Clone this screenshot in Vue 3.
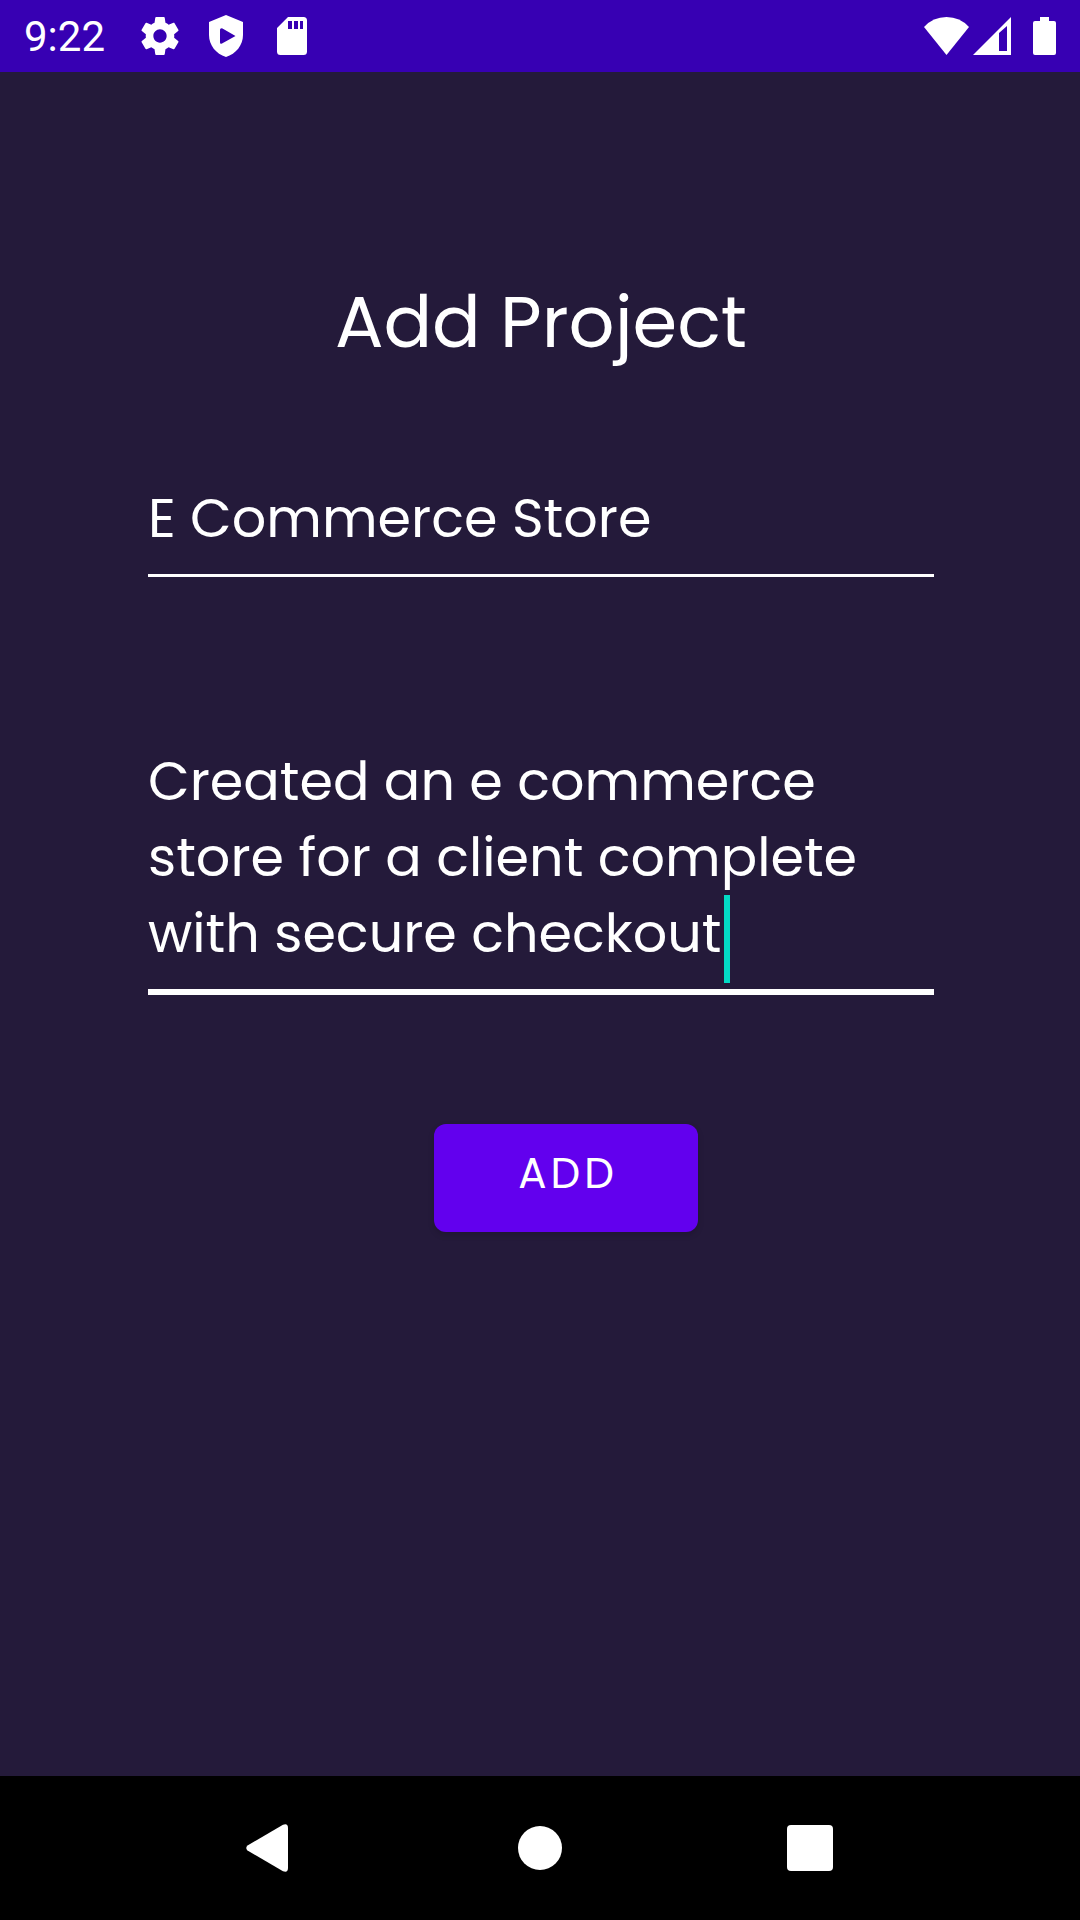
<script setup>
import { ref } from 'vue'

const title = ref('E Commerce Store')
const description = ref('Created an e commerce store for a client complete with secure checkout')
</script>

<template>
  <div class="screen">
    <header class="status">
      <div class="status-left">
        <span class="clock">9:22</span>
        <svg viewBox="2 2 20 20" width="38" height="38" aria-hidden="true">
          <path fill="currentColor" d="M19.43 12.98c.04-.32.07-.64.07-.98s-.03-.66-.07-.98l2.11-1.65c.19-.15.24-.42.12-.64l-2-3.46c-.12-.22-.39-.3-.61-.22l-2.49 1c-.52-.4-1.08-.73-1.69-.98l-.38-2.65A.49.49 0 0 0 14 2h-4c-.25 0-.46.18-.49.42l-.38 2.65c-.61.25-1.17.59-1.69.98l-2.49-1c-.23-.09-.49 0-.61.22l-2 3.46c-.13.22-.07.49.12.64l2.11 1.65c-.04.32-.07.65-.07.98s.03.66.07.98l-2.11 1.65c-.19.15-.24.42-.12.64l2 3.46c.12.22.39.3.61.22l2.49-1c.52.4 1.08.73 1.69.98l.38 2.65c.03.24.24.42.49.42h4c.25 0 .46-.18.49-.42l.38-2.65c.61-.25 1.17-.59 1.69-.98l2.49 1c.23.09.49 0 .61-.22l2-3.46c.12-.22.07-.49-.12-.64l-2.11-1.65zM12 15.5c-1.93 0-3.5-1.57-3.5-3.5s1.57-3.5 3.5-3.5 3.5 1.57 3.5 3.5-1.57 3.5-3.5 3.5z" />
        </svg>
        <svg viewBox="0 0 34 42" width="38" height="42" aria-hidden="true">
          <path fill="currentColor" fill-rule="evenodd" d="M17 0 34 7v13c0 10-7 19-17 22C7 39 0 30 0 20V7zM12.500 13.200Q11 13.200 11 14.700V27.300Q11 29.500 13 28.500L26.500 21 13.500 13.500z" />
        </svg>
        <svg viewBox="0 0 30 38" width="38" height="38" aria-hidden="true">
          <path fill="currentColor" fill-rule="evenodd" d="M11 0H26.500Q30 0 30 3.500V34.500Q30 38 26.500 38H3.500Q0 38 0 34.500V11zM11 4v8h4V4zm6 0v8h4V4zm6 0v8h3V4z" />
        </svg>
      </div>
      <div class="status-right">
        <svg viewBox="0 0 45 38" width="45" height="38" aria-hidden="true">
          <path fill="currentColor" d="M0 10Q9 0 22.500 0T45 10L22.500 38z" />
        </svg>
        <svg class="signal" viewBox="0 0 38 38" width="38" height="38" aria-hidden="true">
          <path fill="currentColor" fill-rule="evenodd" d="M0 38 38 0V38zM26 16V34H34V9z" />
        </svg>
        <svg viewBox="0 0 23 38" width="23" height="38" aria-hidden="true">
          <path fill="currentColor" d="M7 0h9v4h5q2 0 2 2v30q0 2-2 2H2q-2 0-2-2V6q0-2 2-2h5z" />
        </svg>
      </div>
    </header>

    <main class="content">
      <h1>Add Project</h1>
      <form @submit.prevent>
        <input v-model="title" class="field" type="text" aria-label="Project title" />
        <div class="description">
          <textarea v-model="description" class="field active" rows="3" spellcheck="false" aria-label="Project description"></textarea>
          <span class="caret" aria-hidden="true"></span>
        </div>
        <button class="add" type="submit">ADD</button>
      </form>
    </main>

    <nav class="navbar" aria-label="System navigation">
      <button type="button" aria-label="Back">
        <svg class="back" viewBox="0 0 42 48" width="42" height="48">
          <path fill="currentColor" d="M1.500 21.500 37 .800Q42-1 42 4V44Q42 49 37 47.200L1.500 26.500Q-1 24 1.500 21.500z" />
        </svg>
      </button>
      <button type="button" aria-label="Home">
        <svg viewBox="0 0 44 44" width="44" height="44"><circle cx="22" cy="22" r="22" fill="currentColor" /></svg>
      </button>
      <button type="button" aria-label="Recent apps">
        <svg viewBox="0 0 46 46" width="46" height="46"><rect width="46" height="46" rx="4" fill="currentColor" /></svg>
      </button>
    </nav>
  </div>
</template>

<style>
body {
  background: #241a3a;
}
</style>

<style scoped>
.screen {
  display: flex;
  flex-direction: column;
  min-height: 100vh;
  background: #241a3a;
  color: #fff;
  font-family: Poppins, Inter, sans-serif;
}

svg {
  display: block;
}

.status {
  display: flex;
  justify-content: space-between;
  align-items: center;
  height: 72px;
  padding: 0 24px;
  background: #3700b3;
}

.status-left {
  display: flex;
  align-items: center;
  gap: 28px;
}

.clock {
  margin-right: 8px;
  padding-top: 2px;
  font: 42px/48px Roboto, sans-serif;
}

.status-right {
  display: flex;
  align-items: center;
  gap: 4px;
}

.signal {
  margin-right: 18px;
}

.content {
  flex: 1;
  padding: 208px 146px 64px 148px;
}

h1 {
  margin: 0 0 116px;
  font-size: 72px;
  line-height: 84px;
  font-weight: 400;
  text-align: center;
}

form {
  display: flex;
  flex-direction: column;
}

.field {
  display: block;
  box-sizing: border-box;
  width: 100%;
  margin: 0;
  padding: 0 0 18px;
  border: 0;
  border-bottom: 3px solid #fff;
  border-radius: 0;
  outline: 0;
  background: transparent;
  color: inherit;
  font: inherit;
  font-size: 54px;
  line-height: 76px;
  height: 97px;
}

.description {
  position: relative;
  margin: 166px 0 129px;
}

.active {
  height: 252px;
  border-bottom-width: 6px;
  overflow: hidden;
  resize: none;
  caret-color: #03dac5;
}

.caret {
  position: absolute;
  left: 576px;
  bottom: 12px;
  width: 6px;
  height: 88px;
  background: #03dac5;
}

.add {
  align-self: center;
  width: 264px;
  height: 108px;
  margin-left: 50px;
  padding: 0 0 10px 4px;
  border: 0;
  border-radius: 12px;
  background: #6200ee;
  box-shadow: 0 3px 6px rgba(0, 0, 0, 0.15);
  color: inherit;
  font: inherit;
  font-size: 42px;
  letter-spacing: 4px;
}

.navbar {
  display: flex;
  justify-content: center;
  height: 144px;
  background: #000;
}

.navbar button {
  display: flex;
  justify-content: center;
  align-items: center;
  width: 25%;
  padding: 0;
  border: 0;
  background: none;
  color: inherit;
}

.back {
  margin-right: 6px;
}
</style>
